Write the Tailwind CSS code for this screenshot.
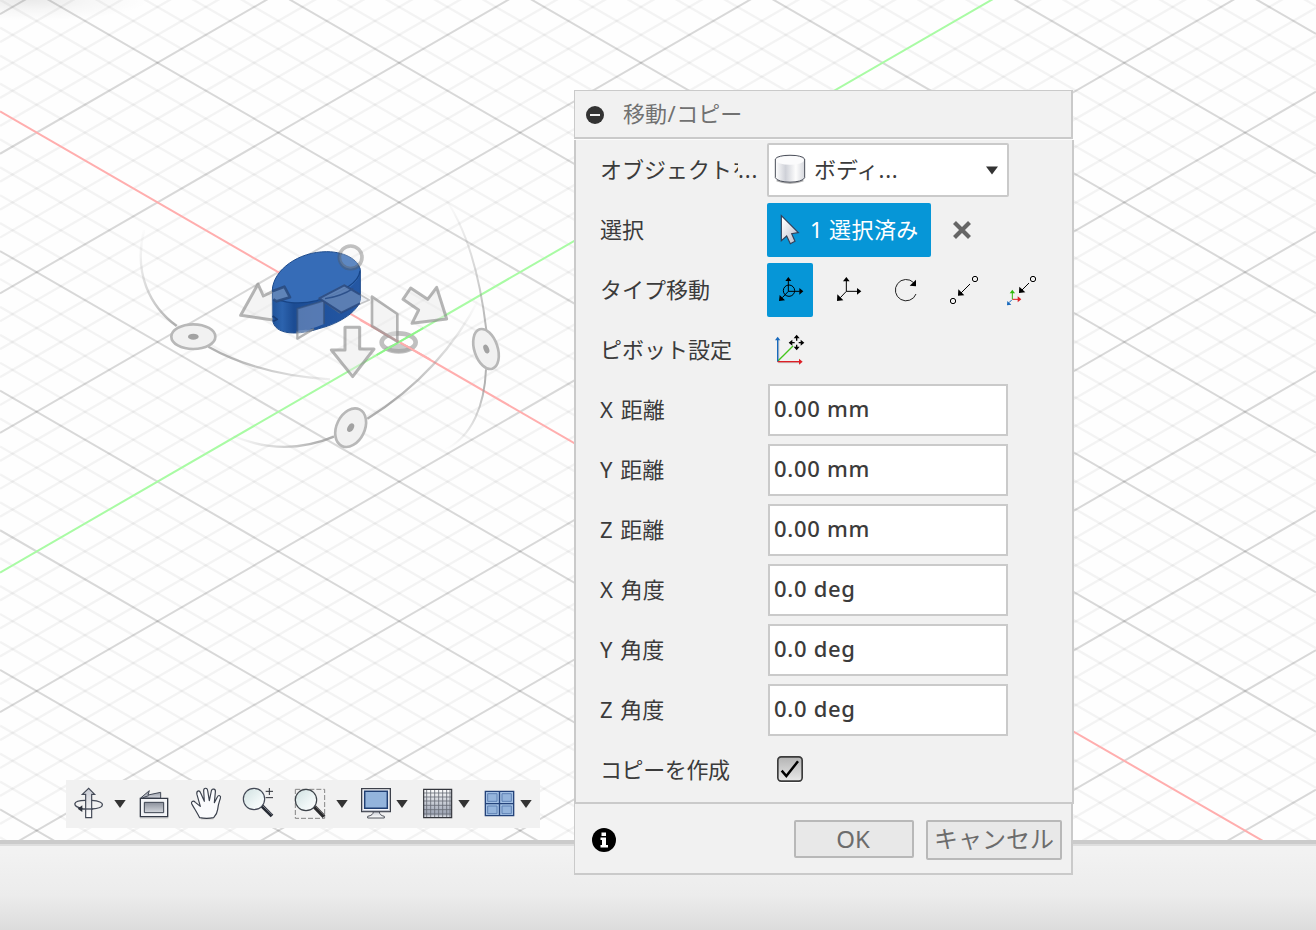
<!DOCTYPE html>
<html lang="ja">
<head>
<meta charset="utf-8">
<title>移動/コピー</title>
<script src="https://cdn.jsdelivr.net/npm/@tailwindcss/browser@4"></script>
</head>
<body class="relative w-[1316px] h-[930px] overflow-hidden bg-white font-['Noto_Sans','Noto_Sans_CJK_JP',sans-serif] text-[22px] leading-[30px] text-[#3b3b3b]">

<div class="flex h-full flex-col">
  <!-- 3D viewport -->
  <main class="relative h-[840px] shrink-0 overflow-hidden bg-[#fefefe]">
    <svg class="block" width="1316" height="840" viewBox="0 0 1316 840" fill="none">
      <defs>
        <linearGradient id="side" x1="425" x2="692" y1="0" y2="0" gradientUnits="userSpaceOnUse">
          <stop offset="0" stop-color="#1f5299"/><stop offset=".12" stop-color="#2c63ae"/><stop offset=".25" stop-color="#1c4c93"/><stop offset=".5" stop-color="#1f519c"/><stop offset="1" stop-color="#2558a4"/>
        </linearGradient>
        <linearGradient id="fadeL" x1="30" y1="120" x2="600" y2="570" gradientUnits="userSpaceOnUse">
          <stop offset="0" stop-color="#999" stop-opacity="0"/><stop offset=".35" stop-color="#999" stop-opacity=".75"/><stop offset=".6" stop-color="#999" stop-opacity=".75"/><stop offset="1" stop-color="#999" stop-opacity=".15"/>
        </linearGradient>
        <linearGradient id="fadeR" x1="0" y1="20" x2="0" y2="780" gradientUnits="userSpaceOnUse">
          <stop offset="0" stop-color="#999" stop-opacity="0"/><stop offset=".5" stop-color="#999" stop-opacity=".7"/><stop offset=".75" stop-color="#999" stop-opacity=".75"/><stop offset="1" stop-color="#999" stop-opacity="0"/>
        </linearGradient>
        <linearGradient id="fadeB" x1="310" y1="740" x2="1050" y2="330" gradientUnits="userSpaceOnUse">
          <stop offset="0" stop-color="#999" stop-opacity=".05"/><stop offset=".25" stop-color="#999" stop-opacity=".75"/><stop offset=".55" stop-color="#999" stop-opacity=".8"/><stop offset="1" stop-color="#999" stop-opacity="0"/>
        </linearGradient>
        <radialGradient id="corner" cx="0.2" cy="0" r="0.8">
          <stop offset="0" stop-color="#000" stop-opacity=".08"/><stop offset=".5" stop-color="#000" stop-opacity=".03"/><stop offset="1" stop-color="#000" stop-opacity="0"/>
        </radialGradient>
      </defs>
      <g id="minor" stroke="#000" stroke-opacity=".042" stroke-width="2.4"></g>
      <g id="major" stroke="#000" stroke-opacity=".15" stroke-width="2"></g>
      <rect width="150" height="26" fill="url(#corner)"/>
      <path d="M0 572.6 1000 -5" stroke="#a9fba4" stroke-width="2"/>
      <path d="M0 111.4 1316 871.6" stroke="#ffaeae" stroke-width="2"/>

      <g transform="translate(130 190) scale(.33333)" stroke-linejoin="round">
        <path d="M42 120C10 250 60 350 140 408M235 470C350 535 470 560 600 568" stroke="url(#fadeL)" stroke-width="7"/>
        <path d="M935 10C1010 110 1050 260 1069 420M1068 538C1064 640 1030 740 940 782" stroke="url(#fadeR)" stroke-width="6"/>
        <path d="M310 738C420 785 520 778 612 740M712 686C850 600 970 480 1050 320" stroke="url(#fadeB)" stroke-width="7"/>
        <ellipse cx="806" cy="457" rx="51" ry="27" stroke="#8c8c8c" stroke-opacity=".55" stroke-width="14"/>
        <path d="M762 476Q806 446 850 476Q806 500 762 476Z" fill="#999" fill-opacity=".5"/>
        <path d="M690 390 900 508" stroke="#ffaeae" stroke-width="6"/>
        <path d="M740 495 880 414" stroke="#8ff58a" stroke-width="6"/>

        <path d="M427 290V385C430 440 510 435 570 415C630 400 691 360 691 325V235Z" fill="url(#side)"/>
        <path d="M427 300C430 240 505 185 590 185C650 185 692 215 691 245C691 285 610 335 510 338C450 340 427 325 427 300Z" fill="#366cb7"/>
        <path d="M428 310C440 345 520 342 560 332C640 308 688 275 690 242" stroke="#174486" stroke-width="4"/>
        <path d="M427 300C430 240 505 185 590 185C650 185 692 215 691 245V325C691 360 630 400 570 415C510 435 430 440 427 385Z" stroke="#1d4a8c" stroke-width="3"/>

        <g fill="#e6e6e6" fill-opacity=".42" stroke="#868686" stroke-opacity=".6" stroke-width="9">
          <path d="M427 305 400 318 384 282 332 376 428 390"/>
          <path d="M645 412H689V477H732L668 560 604 480H645Z" />
          <path d="M842 294 819 328 866 360 846 400 950 387 920 292 893 328Z"/>
          <path d="M726 320 802 372V455L726 408Z" stroke-width="8"/>
          <path d="M502 422V446L552 416" stroke-width="7"/>
        </g>
        <path d="M429 303 463 290 480 322 440 334 429 328Z" fill="#5f84b8"/>
        <path d="M427 304 463 290 480 322 440 334 430 328" stroke="#28497d" stroke-opacity=".85" stroke-width="8"/>
        <path d="M502 425V356L582 332V402Q540 420 502 425Z" fill="#7b96c3" fill-opacity=".6"/>
        <path d="M502 425V356L582 332V402" stroke="#34527f" stroke-opacity=".7" stroke-width="6"/>
        <path d="M428 378 442 388 430 394" stroke="#183d77" stroke-width="5"/>
        <path d="M568 325 643 286 718 330 628 368Z" fill="#a9b9d3" fill-opacity=".2" stroke="#777" stroke-opacity=".4" stroke-width="5"/>
        <path d="M568 325 643 286 690 314V340L634 368Z" fill="#6585b6" fill-opacity=".75"/>
        <path d="M690 314 643 286 568 325 634 368 690 340" stroke="#25467e" stroke-opacity=".8" stroke-width="6"/>
        <path d="M585 326C625 320 655 305 670 295" stroke="#2d518b" stroke-width="4"/>
        <circle cx="662" cy="202" r="34" fill="#eee" fill-opacity=".22" stroke="#555" stroke-opacity=".36" stroke-width="11"/>

        <g fill="#f1f1f1" stroke="#b8b8b8" stroke-width="8">
          <ellipse cx="190" cy="440" rx="66" ry="37"/>
          <ellipse cx="1068" cy="477" rx="35" ry="62" transform="rotate(-18 1068 477)"/>
          <ellipse cx="662" cy="713" rx="42" ry="61" transform="rotate(26 662 713)"/>
        </g>
        <g fill="#a2a2a2">
          <ellipse cx="190" cy="440" rx="16" ry="9"/>
          <ellipse cx="1069" cy="477" rx="8" ry="14" transform="rotate(-22 1069 477)"/>
          <ellipse cx="662" cy="713" rx="9" ry="14" transform="rotate(30 662 713)"/>
        </g>
      </g>
    </svg>

    <!-- Navigation bar -->
    <nav class="absolute left-[66px] top-[780px] flex h-[48px] w-[474px] bg-[#f1f1f1]">
      <svg class="shrink-0" width="44" height="48" viewBox="18 15 132 144" fill="none">
        <defs>
          <linearGradient id="gr" x1="0" y1="0" x2="0" y2="1"><stop offset="0" stop-color="#c9ccd4"/><stop offset="1" stop-color="#fff"/></linearGradient>
          <linearGradient id="gm" x1="0" y1="0" x2="0" y2="1"><stop offset="0" stop-color="#8b909c"/><stop offset="1" stop-color="#d5d8de"/></linearGradient>
          <linearGradient id="lens" x1="0" y1="0" x2="1" y2="1"><stop offset="0" stop-color="#cfe0e0"/><stop offset=".6" stop-color="#eef6f6"/><stop offset="1" stop-color="#fff"/></linearGradient>
        </defs>
        <path d="M68 101C35 94 36 76 76 76H95C140 79 136 100 95 102H60" stroke="#434956" stroke-width="4"/>
        <path d="M77 128V58H67L86 40 104 58H95V128Z" fill="url(#gr)" stroke="#434956" stroke-width="3.5"/>
        <path d="M77 102H98" stroke="#434956" stroke-width="4"/>
        <path d="M53 101 67 91V111Z" fill="#2c313c"/>
      </svg>
      <svg class="shrink-0" width="21" height="48" viewBox="150 15 63 144"><path d="M163 75H197L180 99Z" fill="#333"/></svg>
      <svg class="shrink-0" width="46" height="48" viewBox="213 15 138 144" fill="none">
        <path d="M242 69 268 47 264 60 302 52V70Z" fill="url(#gm)" stroke="#434956" stroke-width="3"/>
        <path d="M248 68 266 62" stroke="#434956" stroke-width="3"/>
        <path d="M241 70H323V125H241Z" fill="#f3f4f7" stroke="#353b47" stroke-width="4"/>
        <path d="M253 82H311V113H253Z" fill="url(#gm)" stroke="#3c4350" stroke-width="3"/>
        <path d="M240 129H325" stroke="#000" stroke-opacity=".18" stroke-width="3"/>
      </svg>
      <svg class="shrink-0" width="55" height="48" viewBox="351 15 165 144" fill="none">
        <path d="M419 128C412 115 407 107 396 88 391 80 400 75 406 82L421 94 411 59C408 47 418 44 422 54L433 79 431 47C431 38 442 37 443 47L448 77 454 48C457 38 468 42 466 52L463 83 472 66C476 58 484 62 481 70 476 86 474 90 473 103 472 115 468 120 461 128 450 130 430 130 419 128Z" fill="#fafbfd" stroke="#3a404c" stroke-width="3.5" stroke-linejoin="round"/>
        <path d="M423 132H460" stroke="#000" stroke-opacity=".16" stroke-width="3"/>
      </svg>
      <svg class="shrink-0" width="58" height="48" viewBox="516 15 174 144" fill="none">
        <path d="M605 92 636 123" stroke="#262a33" stroke-width="11"/>
        <path d="M609 93 636 119" stroke="#8d929c" stroke-width="2.5"/>
        <circle cx="582" cy="72" r="32" fill="url(#lens)" stroke="#434956" stroke-width="3.5"/>
        <path d="M617 49H639M628 39V60M617 68H639" stroke="#2c2f36" stroke-width="3"/>
      </svg>
      <svg class="shrink-0" width="40" height="48" viewBox="0 15 120 144" fill="none">
        <path d="M16 43H104V130H16Z" stroke="#858585" stroke-width="3" stroke-dasharray="15 6"/>
        <path d="M73 95 102 125" stroke="#2a2a2c" stroke-width="12"/>
        <path d="M77 94 103 120" stroke="#8b8b8b" stroke-width="2.5"/>
        <circle cx="48" cy="75" r="32" fill="url(#lens)" stroke="#3c4248" stroke-width="3.5"/>
      </svg>
      <svg class="shrink-0" width="24" height="48" viewBox="120 15 72 144"><path d="M139 75H173L156 99Z" fill="#333"/></svg>
      <svg class="shrink-0" width="40" height="48" viewBox="192 15 120 144" fill="none">
        <path d="M250 110H268Q268 121 283 124V129H233V124Q250 121 250 110Z" fill="url(#gr)" stroke="#50545d" stroke-width="3"/>
        <path d="M215 41H301V110H215Z" fill="#f7f8fb" stroke="#3d414b" stroke-width="4"/>
        <path d="M217 107H299" stroke="#b5b9c4" stroke-width="3"/>
        <path d="M224 49H292V100H224Z" fill="#93b4dc" stroke="#203f73" stroke-width="4.5"/>
      </svg>
      <svg class="shrink-0" width="22" height="48" viewBox="312 15 66 144"><path d="M319 75H353L336 99Z" fill="#333"/></svg>
      <svg class="shrink-0" width="39" height="48" viewBox="378 15 117 144" fill="none">
        <defs><linearGradient id="gg" x1="0" y1="0" x2="0" y2="1"><stop offset="0" stop-color="#fff"/><stop offset=".85" stop-color="#9da4b4"/><stop offset="1" stop-color="#e8eaee"/></linearGradient></defs>
        <path d="M401 43H485V128H401Z" fill="url(#gg)"/>
        <path d="M410 43V128M422 43V128M434 43V128M446 43V128M458 43V128M470 43V128M401 54H485M401 66H485M401 78H485M401 91H485M401 104H485M401 117H485M480 43V128" stroke="#686c76" stroke-width="2.5"/>
        <path d="M401 43H485V128H401Z" stroke="#34363c" stroke-width="3.5"/>
      </svg>
      <svg class="shrink-0" width="23" height="48" viewBox="495 15 69 144"><path d="M505 75H539L522 99Z" fill="#333"/></svg>
      <svg class="shrink-0" width="39" height="48" viewBox="564 15 117 144" fill="none">
        <path d="M586 49H671V122H586Z" fill="#a3c0e4" stroke="#24437a" stroke-width="4"/>
        <path d="M628.500 49V122M586 86H671" stroke="#24437a" stroke-width="4"/>
        <path d="M593 56H621V79H593ZM636 56H664V79H636ZM593 93H621V116H593ZM636 93H664V116H636Z" fill="#94b4dc" stroke="#5f82b5" stroke-width="3"/>
      </svg>
      <svg class="shrink-0" width="23" height="48" viewBox="681 15 69 144"><path d="M691 75H725L708 99Z" fill="#333"/></svg>
    </nav>
  </main>
  <!-- Timeline strip -->
  <footer class="flex-1 border-t-4 border-[#cbcbcb] bg-linear-to-b from-[#f2f2f2] from-10% via-[#ececec] via-60% to-[#dcdcdc]"><div class="h-[2px] bg-[#dedede]"></div></footer>
</div>

<!-- Move / copy dialog -->
<section class="absolute left-[574px] top-[90px] flex w-[500px] flex-col">
  <div class="w-[499px] bg-[#fcfcfc] pb-px">
    <header class="flex h-[49px] items-center border border-r-2 border-b-2 border-[#cacaca] bg-[#f1f1f1] pl-[11px] text-[#717171]">
      <svg class="mr-[19px] mt-px shrink-0" width="18" height="18" viewBox="0 0 18 18"><circle cx="9" cy="9" r="9" fill="#333"/><rect x="4" y="8" width="10" height="2" fill="#f1f1f1"/></svg>
      <h1 class="mb-[2px]">移動<span class="mx-[.5px]">/</span>コピー</h1>
    </header>
  </div>

  <div class="flex h-[664px] flex-col border-2 border-t-0 border-[#cacaca] bg-[#f1f1f1] pl-[24px]">
    <div class="flex h-[60px] items-center">
      <div class="flex w-[167px] pb-[2px]"><span class="w-[138px] overflow-hidden whitespace-nowrap">オブジェクトを</span><span class="tracking-[.8px]">...</span></div>
      <div class="flex h-[54px] w-[242px] items-center rounded-xs border-2 border-[#cacaca] bg-white">
        <svg class="shrink-0" width="45" height="50" viewBox="597 180 135 150" fill="none">
          <defs><linearGradient id="cy" x1="0" x2="1" y1="0" y2="0"><stop offset="0" stop-color="#fff"/><stop offset=".35" stop-color="#cfd1d8"/><stop offset=".7" stop-color="#fdfdfd"/><stop offset="1" stop-color="#d4d6dc"/></linearGradient></defs>
          <path d="M620 286Q660 302 700 286" stroke="#000" stroke-opacity=".3" stroke-width="6"/>
          <path d="M616 222V278C622 296 698 296 704 278V222C698 207 622 207 616 222Z" fill="url(#cy)" stroke="#484c57" stroke-width="3"/>
          <ellipse cx="660" cy="226" rx="42" ry="13" fill="#fbfbfc"/>
        </svg>
        <span class="w-[172px] pb-[2px]">ボディ<span class="tracking-[.8px]">...</span></span>
        <svg class="shrink-0" width="12" height="9" viewBox="0 0 12 9"><path d="M0 .5H12L6 8.500Z" fill="#333"/></svg>
      </div>
    </div>

    <div class="flex h-[60px] items-center">
      <div class="w-[167px] pb-[2px]">選択</div>
      <div class="flex h-[54px] w-[164px] items-center rounded-xs bg-[#0696d7] text-white">
        <svg class="shrink-0" width="43" height="54" viewBox="591 354 129 162"><defs><linearGradient id="cu" x1="0" y1="0" x2="1" y2="1"><stop offset=".1" stop-color="#fff"/><stop offset="1" stop-color="#b4b8c6"/></linearGradient></defs><path d="M634 392V467L650 453 661 476 675 469 665 446 685 443Z" fill="url(#cu)" stroke="#31405a" stroke-width="3.500"/></svg>
        <span class="pb-[2px] tracking-[.4px]">1 選択済み</span>
      </div>
      <svg class="ml-[22px]" width="18" height="18" viewBox="0 0 18 18"><path d="M1.500 1.500 16.500 16.500M16.500 1.500 1.500 16.500" stroke="#666" stroke-width="4.200"/></svg>
    </div>

    <div class="flex h-[60px] items-center">
      <div class="w-[167px] pb-[2px]">タイプ移動</div>
      <div class="flex gap-[12px]">
        <svg class="rounded-xs bg-[#0696d7]" width="46" height="54" viewBox="36 24 138 162" fill="none" stroke="#000" stroke-width="3">
          <path d="M100 76V109H134M100 109 82 128"/><circle cx="102" cy="107" r="17"/>
          <path d="M100 66 109 78H91ZM145 109 133 119V99ZM72 138 90 136 74 120Z" fill="#000" stroke="none"/>
        </svg>
        <svg width="46" height="54" viewBox="210 24 138 162" fill="none" stroke="#000" stroke-width="3">
          <path d="M274 76V109H308M274 109 256 128"/><path d="M274 66 284 79H264ZM319 109 306 119V99ZM246 138 265 136 247 118Z" fill="#000" stroke="none"/>
        </svg>
        <svg width="46" height="54" viewBox="384 24 138 162" fill="none" stroke="#222" stroke-width="3">
          <path d="M476 83A32 32 0 1 0 483 117"/><path d="M483 74V94L464 92Z" fill="#000" stroke="none"/>
        </svg>
        <svg width="46" height="54" viewBox="558 24 138 162" fill="none" stroke="#000" stroke-width="3">
          <circle cx="660" cy="72" r="8"/><circle cx="594" cy="138" r="8"/><path d="M645 87 618 114"/><path d="M609 122 628 121 610 103Z" fill="#000" stroke="none"/>
        </svg>
        <svg width="46" height="54" viewBox="732 24 138 162" fill="none" stroke-width="3">
          <circle cx="834" cy="72" r="8" stroke="#000"/><path d="M822 84 800 106" stroke="#000"/><path d="M792 114 811 112 793 95Z" fill="#000"/>
          <path d="M772 133V113" stroke="#2fb80a"/><path d="M772 104 780 115H764Z" fill="#2fb80a"/>
          <path d="M772 133H790" stroke="#dd1f26"/><path d="M799 133 788 142V124Z" fill="#dd1f26"/>
          <path d="M770 135 762 143" stroke="#1769bd"/><path d="M756 151 769 149 757 138Z" fill="#1769bd"/>
        </svg>
      </div>
    </div>

    <div class="flex h-[60px] items-center">
      <div class="w-[167px] pb-[2px]">ピボット設定</div>
      <svg width="46" height="54" viewBox="36 204 138 162" fill="none" stroke-width="3">
        <path d="M70 323H136M71 256V320" stroke="#000" stroke-opacity=".15" stroke-width="4"/>
        <path d="M68 319 114 273" stroke="#43c61c" stroke-width="4"/>
        <path d="M68 320V254" stroke="#1769bd" stroke-width="4"/><path d="M68 245 76 256H60Z" fill="#1769bd"/>
        <path d="M68 320H133" stroke="#dd1f26" stroke-width="4"/><path d="M143 320 132 329V311Z" fill="#dd1f26"/>
        <path d="M125 244V257M125 269V281M106 263H119M131 263H144" stroke="#000" stroke-width="4"/>
        <path d="M125 239 134 250H116ZM125 286 134 275H116ZM101 263 112 254V272ZM148 263 137 254V272Z" fill="#000"/>
      </svg>
    </div>

    <div class="flex h-[60px] items-center"><div class="w-[168px] pb-[2px]"><span class="mr-[2px]">X </span>距離</div><div class="flex h-[52px] w-[240px] items-center border-2 border-[#cacaca] bg-white pb-[4px] pl-[4px] font-medium tracking-[.7px]">0.00 mm</div></div>
    <div class="flex h-[60px] items-center"><div class="w-[168px] pb-[2px]"><span class="mr-[2px]">Y </span>距離</div><div class="flex h-[52px] w-[240px] items-center border-2 border-[#cacaca] bg-white pb-[4px] pl-[4px] font-medium tracking-[.7px]">0.00 mm</div></div>
    <div class="flex h-[60px] items-center"><div class="w-[168px] pb-[2px]"><span class="mr-[2px]">Z </span>距離</div><div class="flex h-[52px] w-[240px] items-center border-2 border-[#cacaca] bg-white pb-[4px] pl-[4px] font-medium tracking-[.7px]">0.00 mm</div></div>
    <div class="flex h-[60px] items-center"><div class="w-[168px] pb-[2px]"><span class="mr-[2px]">X </span>角度</div><div class="flex h-[52px] w-[240px] items-center border-2 border-[#cacaca] bg-white pb-[4px] pl-[4px] font-medium tracking-[.7px]">0.0 deg</div></div>
    <div class="flex h-[60px] items-center"><div class="w-[168px] pb-[2px]"><span class="mr-[2px]">Y </span>角度</div><div class="flex h-[52px] w-[240px] items-center border-2 border-[#cacaca] bg-white pb-[4px] pl-[4px] font-medium tracking-[.7px]">0.0 deg</div></div>
    <div class="flex h-[60px] items-center"><div class="w-[168px] pb-[2px]"><span class="mr-[2px]">Z </span>角度</div><div class="flex h-[52px] w-[240px] items-center border-2 border-[#cacaca] bg-white pb-[4px] pl-[4px] font-medium tracking-[.7px]">0.0 deg</div></div>

    <div class="flex h-[60px] items-center">
      <div class="w-[177px] pb-[2px] tracking-[-.4px]">コピーを作成</div>
      <svg class="mb-px" width="26" height="27" viewBox="621 48 78 81" fill="none">
        <defs><linearGradient id="cb" x1="0" y1="0" x2="0" y2="1"><stop offset="0" stop-color="#b3b3b3"/><stop offset="1" stop-color="#e9e9e9"/></linearGradient></defs>
        <path d="M630 128H690" stroke="#fff" stroke-width="4"/>
        <rect x="623.500" y="50.500" width="73" height="73" rx="10" fill="url(#cb)" stroke="#3c3c3c" stroke-width="5"/>
        <path d="M635 92 649 108 684 64" stroke="#000" stroke-width="7.500"/>
      </svg>
    </div>
  </div>

  <div class="flex h-[71px] w-[499px] items-start border border-t-0 border-r-2 border-b-2 border-[#cacaca] bg-[#f1f1f1] pl-[17px] pr-[9px] pt-[16px] text-[24px] leading-[34px] text-[#6c6c6c]">
    <svg class="mt-[8px] mr-auto shrink-0" width="24" height="24" viewBox="0 0 24 24"><circle cx="12" cy="12" r="12" fill="#000"/><path d="M9.500 4.500H14V8H9.500ZM8.500 9.500H14V17H16V19.500H8.500V17H10V12H8.500Z" fill="#fff"/></svg>
    <div class="mr-[12px] h-[38px] w-[120px] rounded-xs border-2 border-[#b8b8b8] bg-[#e8e8e8] pr-[2px] text-center">OK</div>
    <div class="h-[40px] w-[136px] rounded-xs border-2 border-[#b8b8b8] bg-[#e8e8e8] text-center leading-[34px]">キャンセル</div>
  </div>
</section>

<script>
  // Isometric ground grid: every fifth line is a major one, k = 0 are the axes.
  const slope = 0.5776, step = 27.92, ox = 399.2, oy = 342;
  for (let k = -32; k <= 48; k++) {
    if (k === 0) continue;
    const group = document.getElementById(k % 5 === 0 ? 'major' : 'minor');
    for (const s of [slope, -slope]) {
      const line = document.createElementNS('http://www.w3.org/2000/svg', 'line');
      line.setAttribute('x1', 0);
      line.setAttribute('x2', 1316);
      line.setAttribute('y1', oy + k * step - s * ox);
      line.setAttribute('y2', oy + k * step + s * (1316 - ox));
      group.appendChild(line);
    }
  }
</script>
</body>
</html>
